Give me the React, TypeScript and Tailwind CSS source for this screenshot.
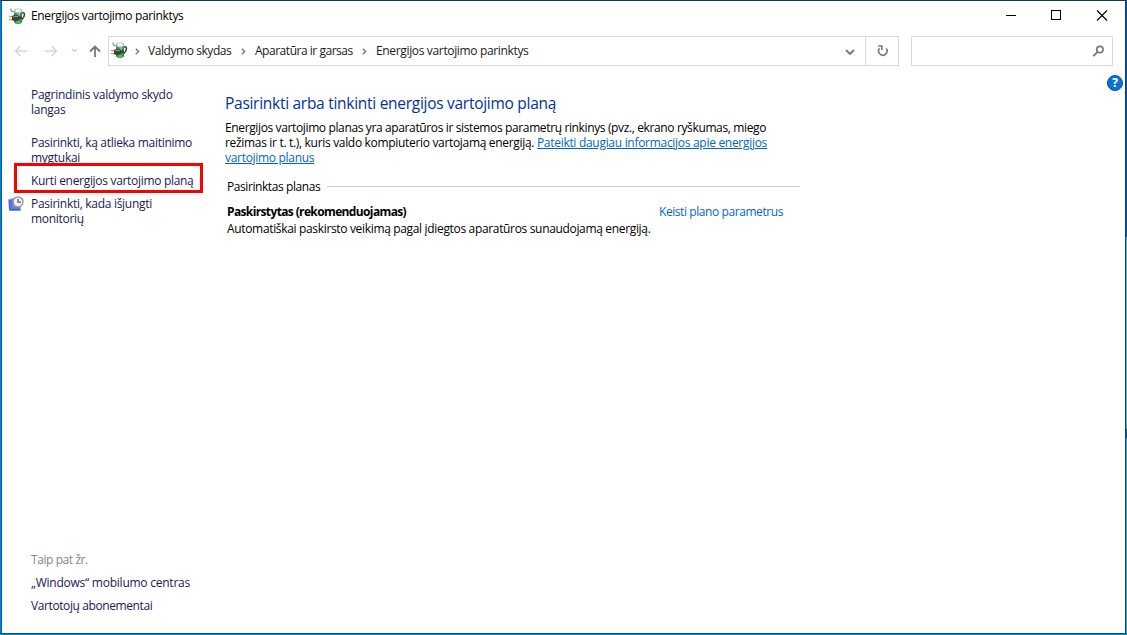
import type { ReactNode } from "react";

function PowerIcon() {
  return (
    <svg width="17" height="17" viewBox="0 0 17 17" className="shrink-0">
      <path d="M2 .3C1.600 2.600 3 4 5.500 3.700" fill="none" stroke="#8a8f96" strokeWidth="1.200" />
      <path d="M12.600 5c3.600-1.400 3.800 3.400.4 6.400" fill="none" stroke="#34393d" strokeWidth="1.500" />
      <path d="M5 3.500v10.300c0 3 8 3 8 0v-10.300z" fill="#2c983a" />
      <path d="M8.500 5h2.500v5h-2.500z" fill="#6fd46e" />
      <path d="M7.500 12.800h3.500v2.500h-3.500z" fill="#50c052" />
      <path d="M4.800 4.800V2.700c0-3 8.400-3 8.400 0v2.100c-2 1-6.400 1-8.400 0z" fill="#a4acbf" />
      <ellipse cx="9.100" cy="2.800" rx="3" ry="1.700" fill="#f4f6fb" />
      <path d="M0 8.700h4M0 11.700h4" stroke="#d6a32a" strokeWidth="1.300" />
      <path d="M3 8l2.800-1.300 3 .3 1.800 1.500h2.200v2.400h-2.200l-1.800 1.700-3 .7-2.800-1.300z" fill="#3c4046" />
      <path d="M4.500 8.900l2.500-.8 2 .7" fill="none" stroke="#a5a9b0" strokeWidth="1" />
    </svg>
  );
}

function MonitorClockIcon() {
  return (
    <svg width="16" height="16" viewBox="0 0 16 16" className="shrink-0">
      <path d="M.5 3.500L6 2.500v8l6.500.5v3.500H1.500z" fill="#5c7cdc" stroke="#9ba9d4" />
      <path d="M1.800 4.500v9.300h10.500" fill="none" stroke="#3a58c4" />
      <circle cx="10" cy="5.800" r="5" fill="#eef0f3" stroke="#8d9095" strokeWidth="1.300" />
      <path d="M10 2.700v3.400h3" fill="none" stroke="#555b66" strokeWidth="1.200" />
    </svg>
  );
}

function Chevron() {
  return (
    <svg width="5" height="7" viewBox="0 0 5 7" className="shrink-0">
      <path d="M.8.8l2.800 2.700L.8 6.200" fill="none" stroke="#777" strokeWidth="1.400" />
    </svg>
  );
}

function Line({ className = "", children }: { className?: string; children: ReactNode }) {
  return <span className={`block whitespace-nowrap ${className}`}>{children}</span>;
}

function TitleBar() {
  return (
    <header className="flex h-[30px] shrink-0 items-center pl-[7px]">
      <PowerIcon />
      <span className="-mt-0.5 ml-[5px] whitespace-nowrap tracking-[-0.345px] text-black">Energijos vartojimo parinktys</span>
      <div className="ml-auto flex pr-4">
        <svg width="104" height="12" viewBox="0 0 104 12" fill="none" stroke="#000">
          <path d="M1 5.500h10M46.500.500h9v9h-9z" shapeRendering="crispEdges" />
          <path d="M92 .500l10 10M102 .500l-10 10" strokeWidth="1.100" />
        </svg>
      </div>
    </header>
  );
}

function AddressRow() {
  return (
    <nav className="mt-[5px] flex h-[30px] shrink-0 items-stretch pr-3">
      <svg width="106" height="30" viewBox="0 0 106 30" fill="none" className="shrink-0">
        <path d="M13.500 15H25M18.500 10l-5 5 5 5M43 15h11.500M49.500 10l5 5-5 5" stroke="#d9d9d9" strokeWidth="1.500" />
        <path d="M70 13l2.500 2.500L75 13" stroke="#d0d0d0" strokeWidth="1.400" />
        <path d="M93 21V11M88 15.500l5-5 5 5" stroke="#777" strokeWidth="1.800" />
      </svg>
      <div className="flex w-[791px] items-center border border-[#d9d9d9]">
        <span className="-mt-px ml-0.5"><PowerIcon /></span>
        <span className="ml-[7px]"><Chevron /></span>
        <span className="-mt-0.5 ml-2 w-[93px] whitespace-nowrap tracking-[-0.43px]">Valdymo skydas</span>
        <Chevron />
        <span className="-mt-0.5 ml-[9px] w-[107px] whitespace-nowrap tracking-[-0.47px]">Aparatūra ir garsas</span>
        <Chevron />
        <span className="-mt-0.5 ml-[9px] whitespace-nowrap tracking-[-0.345px]">Energijos vartojimo parinktys</span>
        <svg width="10" height="7" viewBox="0 0 10 7" className="ml-auto mr-[10px] mt-0.5">
          <path d="M1 1l4 4 4-4" fill="none" stroke="#777" strokeWidth="1.900" />
        </svg>
        <div className="flex h-full w-[33px] items-center justify-center border-l border-[#d9d9d9] pl-0.5">
          <svg width="12" height="12" viewBox="0 0 12 12" fill="none" stroke="#777" strokeWidth="1.600">
            <path d="M2.600 3.300A4.200 4.200 0 1 0 9.200 3.400M1.200 1h3.600v4" />
          </svg>
        </div>
      </div>
      <div className="ml-3 flex flex-1 items-center justify-end border border-[#d9d9d9] pr-[7px]">
        <svg width="13" height="13" viewBox="0 0 13 13" fill="none" stroke="#777">
          <circle cx="7.900" cy="4.600" r="3.200" strokeWidth="1.600" />
          <path d="M5.500 7L1.300 11.200" strokeWidth="1.900" />
        </svg>
      </div>
    </nav>
  );
}

function Sidebar() {
  return (
    <aside className="flex w-[223px] shrink-0 flex-col pt-[21px] text-[#151c55]">
      <div className="pl-[29px]">
        <Line className="tracking-[-0.27px]">Pagrindinis valdymo skydo</Line>
        <Line className="tracking-[-0.27px]">langas</Line>
        <Line className="mt-[18px] tracking-[-0.3px]">Pasirinkti, ką atlieka maitinimo</Line>
        <Line className="tracking-[-0.27px]">mygtukai</Line>
      </div>
      <div className="relative -mt-0.5 ml-3 flex h-[30px] w-[189px] items-center border-[3px] border-[#fb0000] pl-3.5 pt-[5px]">
        <Line className="tracking-[-0.31px]">Kurti energijos vartojimo planą</Line>
      </div>
      <div className="mt-[3px] flex pl-1.5">
        <MonitorClockIcon />
        <div className="ml-[7px]">
          <Line className="tracking-[-0.29px]">Pasirinkti, kada išjungti</Line>
          <Line className="tracking-[-0.3px]">monitorių</Line>
        </div>
      </div>
      <div className="mb-5 mt-auto flex flex-col gap-2 pl-[29px]">
        <Line className="tracking-[-0.42px] text-[#858585]">Taip pat žr.</Line>
        <Line className="tracking-[-0.24px]">„Windows“ mobilumo centras</Line>
        <Line className="tracking-[-0.4px]">Vartotojų abonementai</Line>
      </div>
    </aside>
  );
}

function Plans() {
  return (
    <main className="w-[575px] pt-[26px] text-black">
      <h1 className="whitespace-nowrap text-[15.5px] leading-[22px] tracking-[-0.28px] text-[#003399]">
        Pasirinkti arba tinkinti energijos vartojimo planą
      </h1>
      <div className="mt-1.5">
        <Line className="tracking-[-0.37px]">
          Energijos vartojimo planas yra aparatūros ir sistemos parametrų rinkinys (pvz., ekrano ryškumas, miego
        </Line>
        <Line className="tracking-[-0.32px]">
          režimas ir t. t.), kuris valdo kompiuterio vartojamą energiją.{" "}
          <a className="tracking-[-0.295px] text-[#0066cc] underline">Pateikti daugiau informacijos apie energijos</a>
        </Line>
        <Line><a className="tracking-[-0.3px] text-[#0066cc] underline">vartojimo planus</a></Line>
      </div>
      <div className="mt-3.5 flex items-center pl-0.5">
        <Line className="w-[100px] tracking-[-0.42px]">Pasirinktas planas</Line>
        <div className="h-px flex-1 bg-[#c8c8c8]" />
      </div>
      <div className="mt-2.5 flex justify-between pl-0.5 pr-[17px]">
        <Line className="font-bold tracking-[-0.63px]">Paskirstytas (rekomenduojamas)</Line>
        <a className="whitespace-nowrap tracking-[-0.42px] text-[#0066cc]">Keisti plano parametrus</a>
      </div>
      <Line className="mt-0.5 pl-0.5 tracking-[-0.335px]">
        Automatiškai paskirsto veikimą pagal įdiegtos aparatūros sunaudojamą energiją.
      </Line>
    </main>
  );
}

export default function App() {
  return (
    <div className="flex h-[635px] w-[1127px] flex-col overflow-hidden bg-white font-['Open_Sans','Noto_Sans',sans-serif] text-xs leading-[15px] text-[#1a1a1a]">
      <div className="h-px shrink-0 bg-[#153760]" />
      <div className="flex min-h-0 flex-1">
        <div className="w-px bg-[#0083d6]" />
        <div className="w-px bg-[#075b91]" />
        <div className="flex min-w-0 flex-1 flex-col">
          <TitleBar />
          <AddressRow />
          <div className="flex min-h-0 flex-1">
            <Sidebar />
            <Plans />
            <div className="ml-auto pr-0.5 pt-[9px]">
              <div className="flex size-4 items-center justify-center rounded-full border border-[#07508f] bg-[#0874d1] text-xs font-bold text-white">?</div>
            </div>
          </div>
        </div>
        <div className="w-px bg-[#173e69]" />
        <div className="flex w-px flex-col">
          <div className="h-[236px] bg-[#0550aa]" />
          <div className="h-[192px] bg-[#50b8ca]" />
          <div className="h-[9px] bg-[#0753a8]" />
          <div className="flex-1 bg-[#36a8cc]" />
        </div>
      </div>
      <div className="h-px shrink-0 bg-[#075b82]" />
      <div className="h-px shrink-0 bg-[#0087c7]" />
    </div>
  );
}
